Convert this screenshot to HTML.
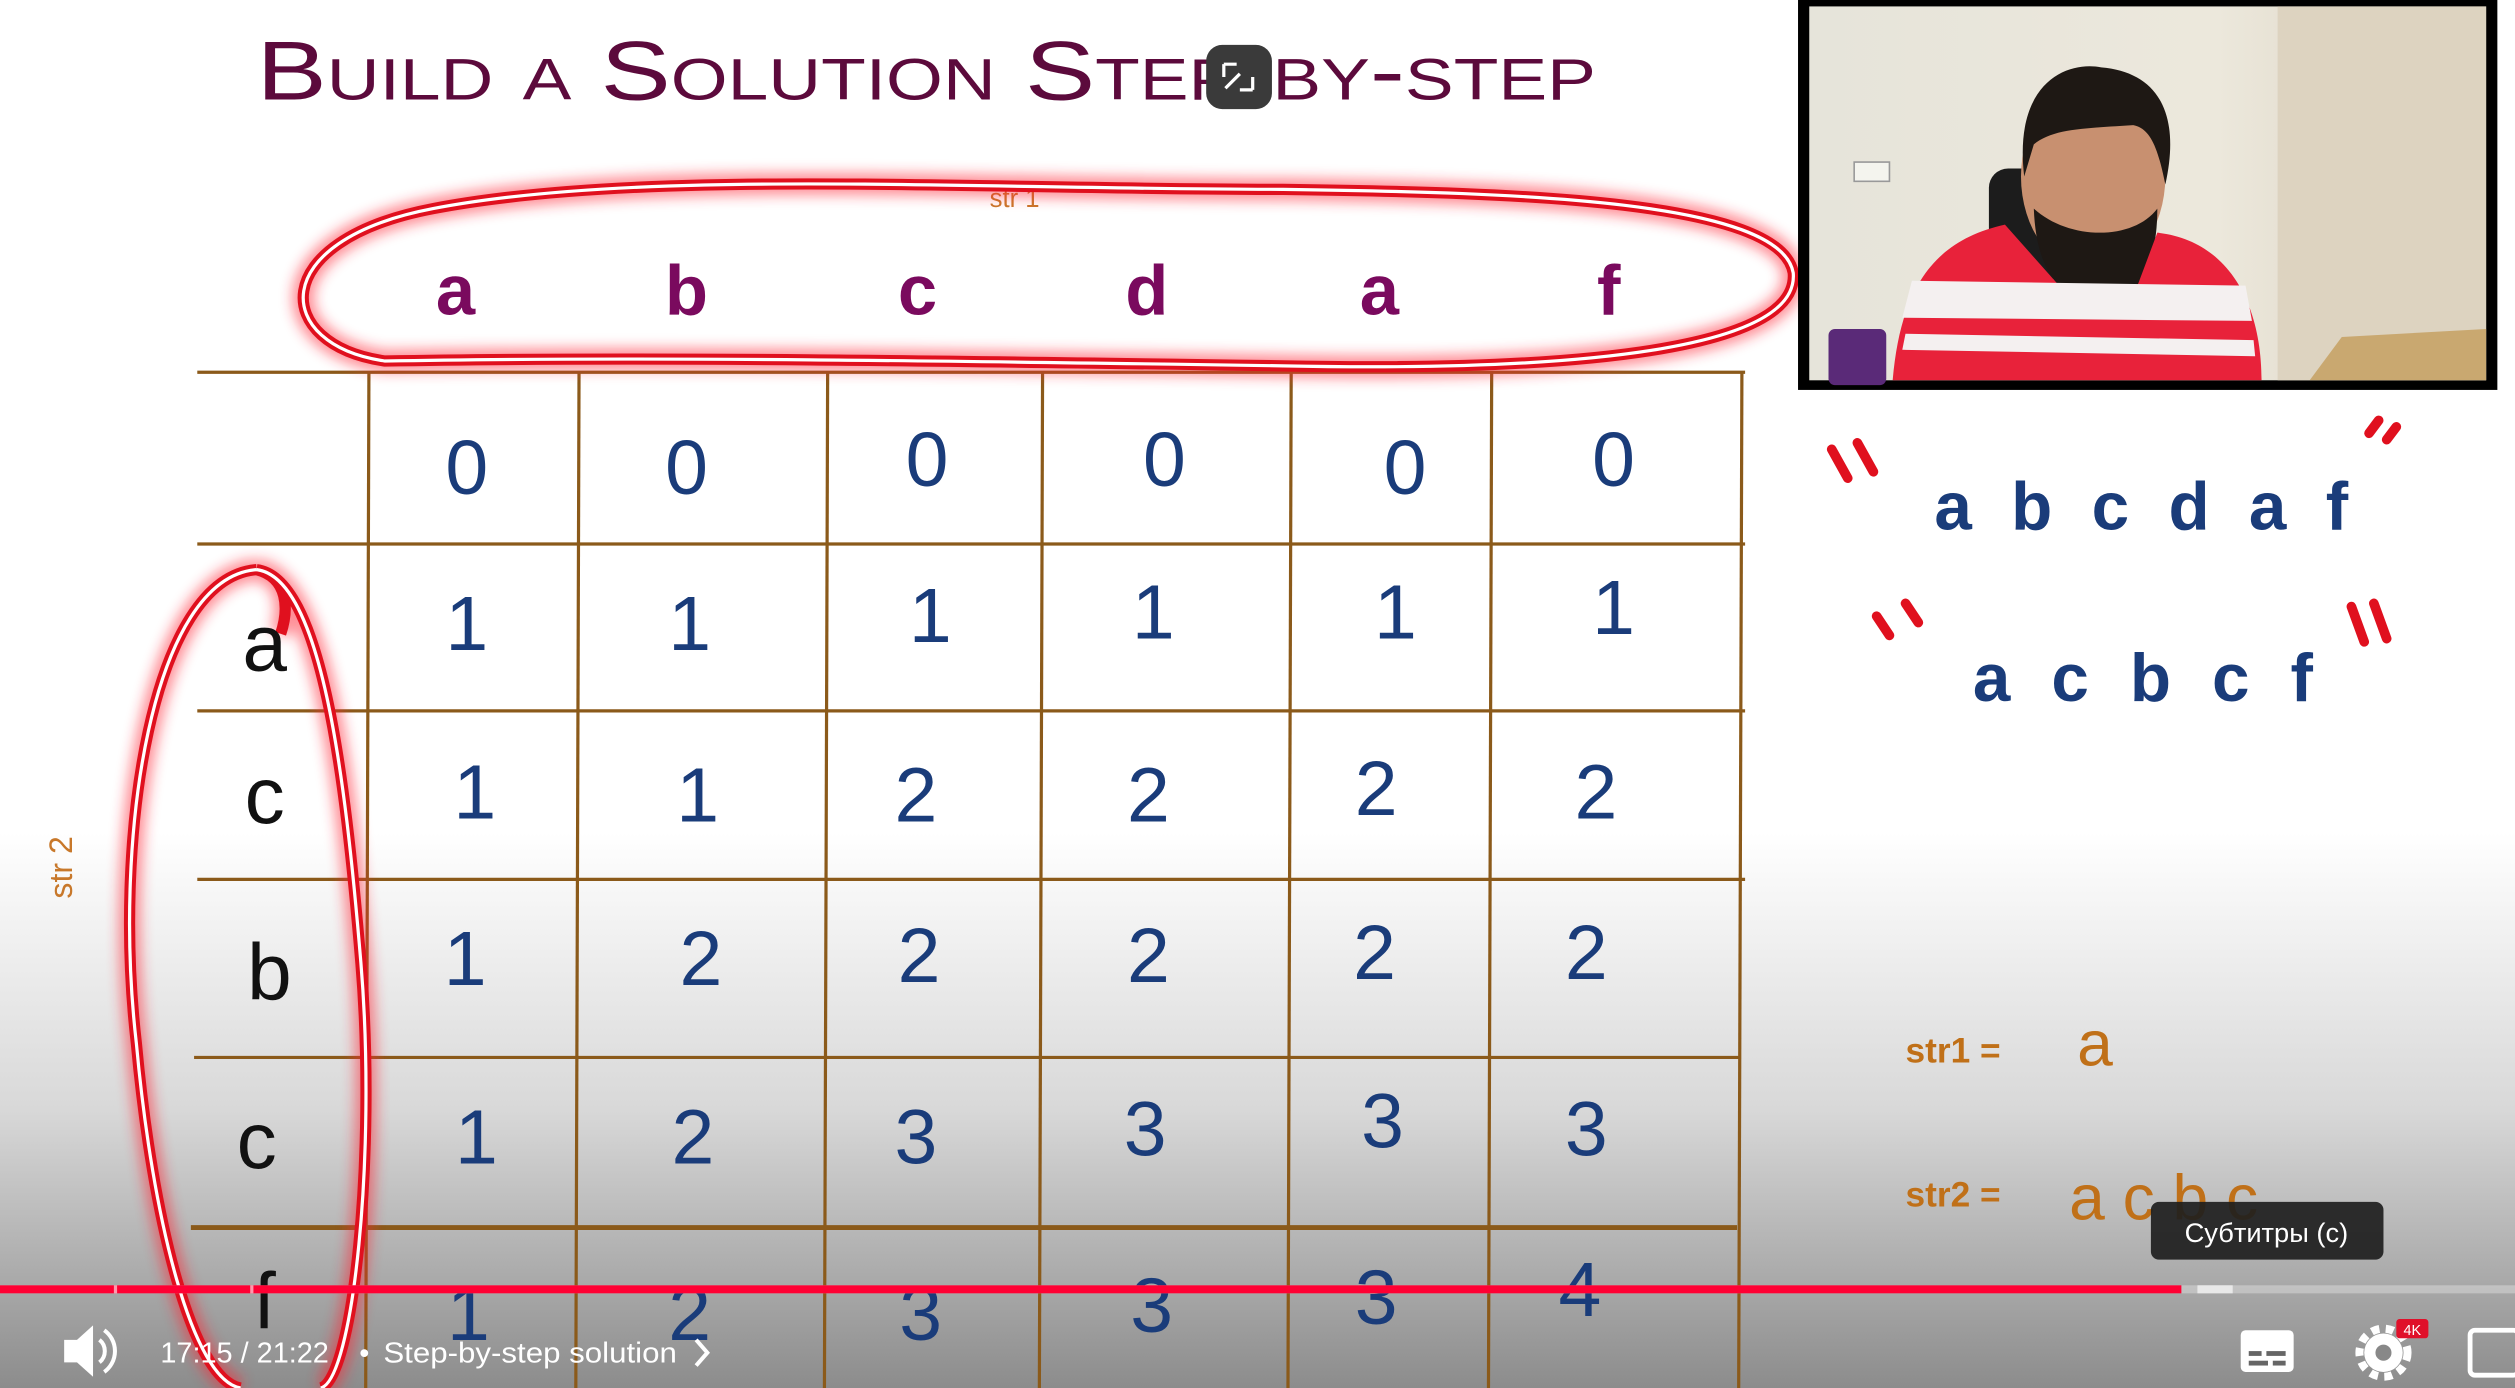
<!DOCTYPE html>
<html><head><meta charset="utf-8"><style>
html,body{margin:0;padding:0;width:2515px;height:1388px;overflow:hidden;background:#fff}
svg{display:block}
</style></head><body>
<svg width="2515" height="1388" viewBox="0 0 1568 865" preserveAspectRatio="none" xmlns="http://www.w3.org/2000/svg" font-family="Liberation Sans, sans-serif">
<defs>
<linearGradient id="bg" x1="0" y1="0" x2="0" y2="1">
<stop offset="0" stop-color="#fff"/><stop offset="0.6" stop-color="#fff"/><stop offset="0.8" stop-color="#d8d8d8"/><stop offset="1" stop-color="#8c8c8c"/>
</linearGradient>
<linearGradient id="wall" x1="0" y1="0" x2="1" y2="0">
<stop offset="0" stop-color="#e6e4da"/><stop offset="0.6" stop-color="#ece8dc"/><stop offset="1" stop-color="#d9cfbd"/>
</linearGradient>
<filter id="glow" x="-10%" y="-20%" width="120%" height="140%"><feGaussianBlur stdDeviation="4"/></filter>
</defs>
<rect width="1568" height="865" fill="url(#bg)"/>

<!-- title -->
<text x="160" y="62" font-size="52" fill="#5c0a3c" style="font-variant:small-caps" textLength="835" lengthAdjust="spacingAndGlyphs">Build a Solution Step-by-step</text>
<rect x="752" y="28" width="41" height="40" rx="10" fill="#3a3a3a"/>
<path d="M763 40h8M763 40v8M781 56h-8M781 56v-8M764 55l9-9" stroke="#fff" stroke-width="2" fill="none"/>

<!-- grid -->
<g stroke="#8b5a1a" stroke-width="2">
<line x1="123" y1="232" x2="1088" y2="232"/><line x1="123" y1="339" x2="1088" y2="339"/>
<line x1="123" y1="443" x2="1088" y2="443"/><line x1="123" y1="548" x2="1088" y2="548"/>
<line x1="121" y1="659" x2="1085" y2="659"/><line x1="119" y1="765" x2="1083" y2="765" stroke-width="3"/>
<line x1="230" y1="232" x2="228" y2="865"/><line x1="361" y1="232" x2="359" y2="865"/>
<line x1="516" y1="232" x2="514" y2="865"/><line x1="650" y1="232" x2="648" y2="865"/>
<line x1="805" y1="232" x2="803" y2="865"/><line x1="930" y1="232" x2="928" y2="865"/>
<line x1="1086" y1="232" x2="1084" y2="865"/>
</g>

<text x="617" y="129" font-size="16" fill="#c8782a">str 1</text>
<g font-size="44" fill="#7a0a5e" text-anchor="middle" font-weight="bold">
<text x="284" y="196">a</text><text x="428" y="196">b</text><text x="572" y="196">c</text><text x="715" y="196">d</text><text x="860" y="196">a</text><text x="1003" y="196">f</text>
</g>

<!-- red loops -->
<g fill="none">
<path d="M240 225 C170 215 165 150 270 130 C400 105 600 118 800 118 C950 120 1110 125 1118 170 C1122 215 1000 232 800 228 C600 225 400 222 240 225Z" stroke="#ff2030" stroke-width="14" opacity="0.5" filter="url(#glow)"/>
<path d="M240 225 C170 215 165 150 270 130 C400 105 600 118 800 118 C950 120 1110 125 1118 170 C1122 215 1000 232 800 228 C600 225 400 222 240 225Z" stroke="#e0101e" stroke-width="7"/>
<path d="M240 225 C170 215 165 150 270 130 C400 105 600 118 800 118 C950 120 1110 125 1118 170 C1122 215 1000 232 800 228 C600 225 400 222 240 225Z" stroke="#fff" stroke-width="2"/>
<path d="M160 355 C95 360 70 520 85 650 C95 760 120 860 150 865 M160 355 C200 360 215 480 225 600 C235 720 220 860 200 865 M160 355 C180 360 180 380 175 395" stroke="#ff2030" stroke-width="14" opacity="0.5" filter="url(#glow)"/>
<path d="M160 355 C95 360 70 520 85 650 C95 760 120 860 150 865 M160 355 C200 360 215 480 225 600 C235 720 220 860 200 865 M160 355 C180 360 180 380 175 395" stroke="#e0101e" stroke-width="7"/>
<path d="M160 355 C95 360 70 520 85 650 C95 760 120 860 150 865 M160 355 C200 360 215 480 225 600 C235 720 220 860 200 865" stroke="#fff" stroke-width="2"/>
</g>
<text transform="translate(45 560) rotate(-90)" font-size="20" fill="#c8782a">str 2</text>

<g font-size="50" fill="#111" text-anchor="middle">
<text x="165" y="418">a</text><text x="165" y="513">c</text><text x="168" y="623">b</text><text x="160" y="728">c</text><text x="165" y="828">f</text>
</g>

<g font-size="48" fill="#1a3c7a" text-anchor="middle">
<text x="291" y="308">0</text><text x="428" y="308">0</text><text x="578" y="303">0</text><text x="726" y="303">0</text><text x="876" y="308">0</text><text x="1006" y="303">0</text>
<text x="291" y="405">1</text><text x="430" y="405">1</text><text x="580" y="400">1</text><text x="719" y="398">1</text><text x="870" y="398">1</text><text x="1006" y="395">1</text>
<text x="296" y="510">1</text><text x="435" y="512">1</text><text x="571" y="512">2</text><text x="716" y="512">2</text><text x="858" y="508">2</text><text x="995" y="510">2</text>
<text x="290" y="614">1</text><text x="437" y="614">2</text><text x="573" y="612">2</text><text x="716" y="612">2</text><text x="857" y="610">2</text><text x="989" y="610">2</text>
<text x="297" y="725">1</text><text x="432" y="725">2</text><text x="571" y="725">3</text><text x="714" y="720">3</text><text x="862" y="715">3</text><text x="989" y="720">3</text>
<text x="292" y="835">1</text><text x="430" y="835">2</text><text x="574" y="835">3</text><text x="718" y="830">3</text><text x="858" y="825">3</text><text x="985" y="820">4</text>
</g>

<!-- right side -->
<g font-size="42" fill="#1a3c7a" font-weight="bold">
<text x="1206" y="330" textLength="258" lengthAdjust="spacing">a b c d a f</text>
<text x="1230" y="437" textLength="212" lengthAdjust="spacing">a c b c f</text>
</g>
<g stroke="#e0101e" stroke-width="6" fill="none" stroke-linecap="round">
<path d="M1142 280l10 18M1158 276l10 18M1477 270l6 -8M1488 274l6 -8M1170 384l8 12M1188 376l8 12M1466 378l8 22M1480 376l8 22"/>
</g>
<text x="1188" y="662" font-size="22" fill="#c07018" font-weight="bold">str1 =</text>
<text x="1295" y="664" font-size="40" fill="#c07018">a</text>
<text x="1188" y="752" font-size="22" fill="#c07018" font-weight="bold">str2 =</text>
<text x="1290" y="760" font-size="40" fill="#c07018">a c b c</text>

<!-- webcam -->
<rect x="1121" y="0" width="436" height="243" fill="#000"/>
<rect x="1128" y="4" width="422" height="233" fill="url(#wall)"/>
<rect x="1420" y="4" width="130" height="233" fill="#ddd3c0"/>
<rect x="1156" y="101" width="22" height="12" fill="#f4f4ee" stroke="#999"/>
<rect x="1240" y="105" width="40" height="100" rx="12" fill="#1c1c1c"/>
<rect x="1140" y="205" width="36" height="35" rx="4" fill="#5a2a78"/>
<path d="M1460 210 L1550 205 L1550 237 L1440 237Z" fill="#c9a870"/>
<ellipse cx="1305" cy="110" rx="45" ry="60" fill="#c89070"/>
<path d="M1262 110 C1255 50 1290 38 1310 42 C1345 45 1360 70 1350 115 C1345 90 1340 80 1330 78 C1300 80 1280 80 1268 90Z" fill="#1e1814"/>
<path d="M1268 130 C1270 185 1300 190 1310 190 C1330 188 1345 170 1345 130 C1330 150 1290 150 1268 130Z" fill="#1e1814"/>
<path d="M1180 237 C1185 180 1205 150 1250 140 L1290 185 L1330 185 L1345 145 C1390 150 1410 190 1410 237Z" fill="#e8223a"/>
<path d="M1192 175 L1400 178 L1404 200 L1186 198Z" fill="#f4f0f0"/>
<path d="M1188 208 L1405 212 L1406 222 L1186 218Z" fill="#f4f0f0"/>

<!-- tooltip -->
<rect x="1341" y="749" width="145" height="36" rx="5" fill="#1e1e1e" opacity="0.92"/>
<text x="1413" y="774" font-size="17" fill="#fff" text-anchor="middle">Субтитры (c)</text>

<!-- progress -->
<rect x="0" y="801" width="1568" height="5" fill="#c8c8c8" opacity="0.8"/>
<rect x="0" y="801" width="1360" height="5" fill="#ff0033"/>
<rect x="1370" y="801" width="22" height="5" fill="#e8e8e8"/>
<rect x="71" y="801" width="2" height="5" fill="#fff" opacity="0.6"/>
<rect x="156" y="801" width="2" height="5" fill="#fff" opacity="0.6"/>

<!-- controls -->
<path d="M40 835h8l10-9v32l-10-9h-8z" fill="#fff"/>
<path d="M62 835a9 9 0 0 1 0 14M65 829a16 16 0 0 1 0 26" stroke="#fff" stroke-width="2.5" fill="none"/>
<text x="100" y="849" font-size="18" fill="#fff">17:15 / 21:22</text>
<text x="224" y="849" font-size="18" fill="#fff">•</text>
<text x="239" y="849" font-size="18" fill="#fff" textLength="183" lengthAdjust="spacingAndGlyphs">Step-by-step solution</text>
<path d="M434 835l7 8-7 8" stroke="#fff" stroke-width="2.5" fill="none"/>
<rect x="1397" y="829" width="33" height="26" rx="3" fill="#fff"/>
<rect x="1402" y="842" width="8" height="3" fill="#666"/><rect x="1413" y="842" width="12" height="3" fill="#666"/>
<rect x="1402" y="848" width="12" height="3" fill="#666"/><rect x="1417" y="848" width="8" height="3" fill="#666"/>
<circle cx="1486" cy="843" r="12" fill="#fff"/>
<circle cx="1486" cy="843" r="15" fill="none" stroke="#fff" stroke-width="5" stroke-dasharray="5 4"/>
<circle cx="1486" cy="843" r="5" fill="#888"/>
<rect x="1494" y="822" width="20" height="12" rx="2" fill="#e0102a"/>
<text x="1504" y="832" font-size="9" fill="#fff" text-anchor="middle">4K</text>
<rect x="1540" y="829" width="30" height="28" rx="3" fill="none" stroke="#fff" stroke-width="3"/>
</svg>
</body></html>
